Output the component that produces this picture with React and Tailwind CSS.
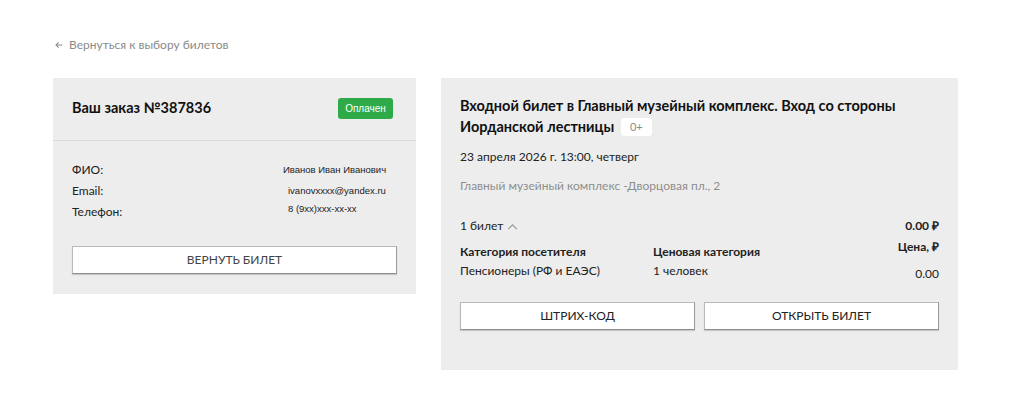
import React from "react";

const font = "font-['Lato',sans-serif]";

/* ── Small icons ────────────────────────────────────────────────────── */
const ArrowLeft = () => (
  <svg viewBox="0 0 10 10" className="w-[8px] h-[8px]" fill="none">
    <path d="M9 5H1.5M4.5 1.8L1.3 5l3.2 3.2" stroke="#8a8a8a" strokeWidth="1.3" />
  </svg>
);

const ChevronUp = () => (
  <svg viewBox="0 0 12 8" className="w-[11px] h-[7px]" fill="none">
    <path d="M1 7l5-5 5 5" stroke="#9a9a9a" strokeWidth="1.4" />
  </svg>
);

const OutlineButton = ({ children, className = "" }) => (
  <button
    type="button"
    className={
      "h-[28px] bg-white border border-[#b9b9b9] border-b-[#8c8c8c] border-r-[#9c9c9c] shadow-[0_1px_1px_rgba(0,0,0,0.15)] text-[12px] text-[#222] uppercase " +
      className
    }
  >
    {children}
  </button>
);

const InfoRow = ({ label, value, shift = "" }) => (
  <div className="flex h-[21px]">
    <span className="w-[211px]">{label}</span>
    <span className={"whitespace-nowrap text-[9.5px] font-['Liberation_Sans',sans-serif] " + shift}>{value}</span>
  </div>
);

/* ── Order card ─────────────────────────────────────────────────────── */
const OrderCard = () => (
  <div className="w-[363px] h-[216px] bg-[#ededed] flex flex-col">
    <div className="h-[63px] px-[19px] pb-[2px] flex items-center justify-between border-b border-[#dcdcdc]">
      <h1 className="text-[14.5px] font-bold text-[#111]">Ваш заказ №387836</h1>
      <span className="mr-[4px] w-[55px] h-[21px] rounded-[3px] bg-[#2eab48] text-white text-[10px] flex items-center justify-center font-['Liberation_Sans',sans-serif]">
        Оплачен
      </span>
    </div>
    <div className="px-[19px] pt-[20px] text-[12px] text-[#222]">
      <InfoRow label="ФИО:" value="Иванов Иван Иванович" shift="pt-[2px]" />
      <InfoRow label="Email:" value="ivanovxxxx@yandex.ru" shift="pl-[5px] pt-[2px]" />
      <InfoRow label="Телефон:" value="8 (9xx)xxx-xx-xx" shift="pl-[5px] -mt-[1px]" />
      <OutlineButton className="w-full mt-[22px] text-[#444]">Вернуть билет</OutlineButton>
    </div>
  </div>
);

/* ── Ticket card ────────────────────────────────────────────────────── */
const TicketCard = () => (
  <div className="w-[517px] h-[292px] bg-[#ededed] px-[19px] pt-[17px] text-[#222]">
    <h2 className="text-[14.5px] font-bold text-[#111] leading-[21px]">
      Входной билет в Главный музейный комплекс. Вход со стороны
      <br />
      Иорданской лестницы{" "}
      <span className="inline-flex items-center justify-center ml-[3px] w-[31px] h-[18px] rounded-[3px] bg-white text-[11px] font-normal text-[#8a8a8a] align-[1px]">
        0+
      </span>
    </h2>
    <p className="mt-[11px] text-[12px]">23 апреля 2026 г. 13:00, четверг</p>
    <p className="mt-[11px] text-[12px] text-[#8d8d8d]">Главный музейный комплекс -Дворцовая пл., 2</p>

    <div className="mt-[22px] flex justify-between items-center text-[12px]">
      <span className="flex items-center gap-[4px]">
        1 билет <ChevronUp />
      </span>
      <span className="font-bold">0.00 ₽</span>
    </div>

    <div className="mt-[3px] grid grid-cols-[193px_1fr_auto] text-[12px]">
      <span className="font-bold pt-[5px]">Категория посетителя</span>
      <span className="font-bold pt-[5px]">Ценовая категория</span>
      <span className="font-bold text-right">Цена, ₽</span>
      <span className="mt-[1px]">Пенсионеры (РФ и ЕАЭС)</span>
      <span className="mt-[1px]">1 человек</span>
      <span className="text-right mt-[4px]">0.00</span>
    </div>

    <div className="mt-[19px] flex gap-[9px]">
      <OutlineButton className="flex-1">Штрих-код</OutlineButton>
      <OutlineButton className="flex-1">Открыть билет</OutlineButton>
    </div>
  </div>
);

/* ── App ────────────────────────────────────────────────────────────── */
export default function App() {
  return (
    <div className={"w-[1024px] h-[403px] bg-white " + font}>
      <div className="pt-[36px] pl-[55px] flex items-center gap-[6px] text-[12px] text-[#8a8a8a]">
        <ArrowLeft />
        <span>Вернуться к выбору билетов</span>
      </div>
      <div className="mt-[24px] pl-[53px] flex items-start gap-[25px]">
        <OrderCard />
        <TicketCard />
      </div>
    </div>
  );
}
